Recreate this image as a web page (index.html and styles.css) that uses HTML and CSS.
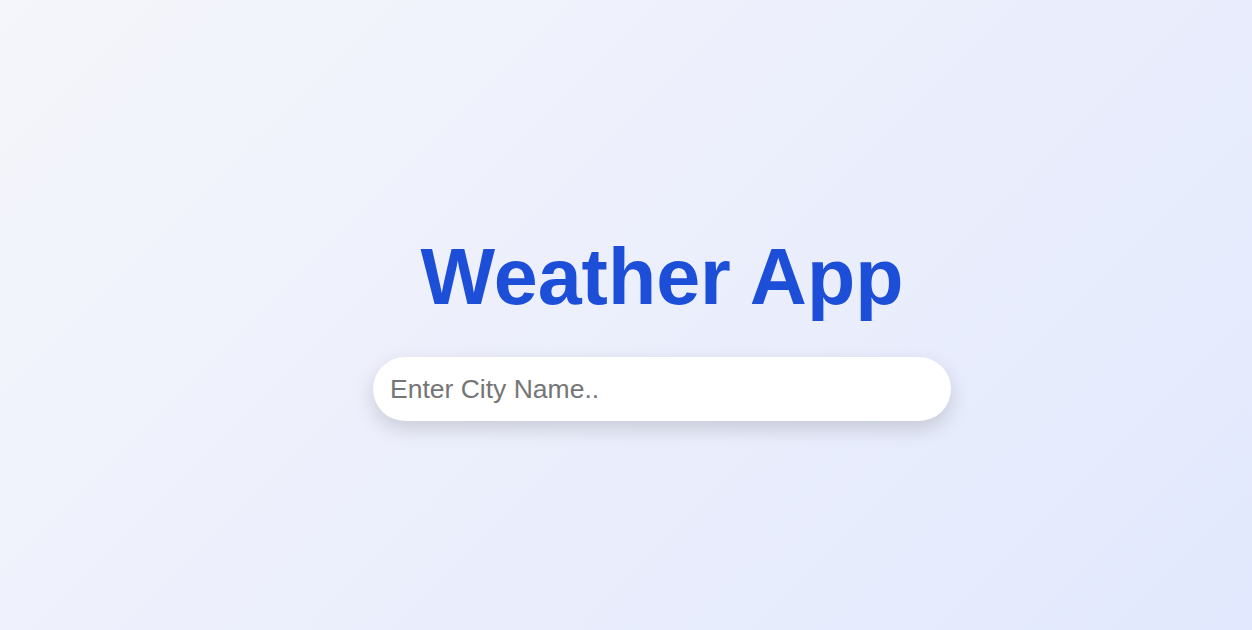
FILE: index.html
```html
<!DOCTYPE html>
<html lang="en">
<head>
<meta charset="utf-8">
<title>Weather App</title>
<link rel="stylesheet" href="styles.css">
</head>
<body>
<main class="app">
  <h1 class="title">Weather App</h1>
  <input class="search" type="text" placeholder="Enter City Name.." autofocus>
</main>
</body>
</html>
```
FILE: styles.css
```css
html, body {
  margin: 0;
  height: 100%;
}
body {
  background: linear-gradient(135deg, #f5f6fb 0%, #e2e8fd 100%);
  font-family: "Liberation Sans", Arial, sans-serif;
  display: flex;
  align-items: center;
  justify-content: center;
  box-sizing: border-box;
  padding-top: 23px;
  padding-left: 72px;
}
.app {
  display: flex;
  flex-direction: column;
  align-items: center;
}
.title {
  margin: 0 0 35px;
  font-size: 79px;
  line-height: 1.15;
  font-weight: 700;
  color: #1d4ed8;
}
.search {
  width: 578px;
  height: 64px;
  box-sizing: border-box;
  border: none;
  outline: none;
  border-radius: 32px;
  background: #fff;
  padding: 0 17px;
  font-family: "Liberation Sans", Arial, sans-serif;
  font-size: 26.5px;
  color: #333;
  box-shadow: 0 8px 20px rgba(0, 0, 0, 0.15);
}
.search::placeholder {
  color: #757575;
}
```
